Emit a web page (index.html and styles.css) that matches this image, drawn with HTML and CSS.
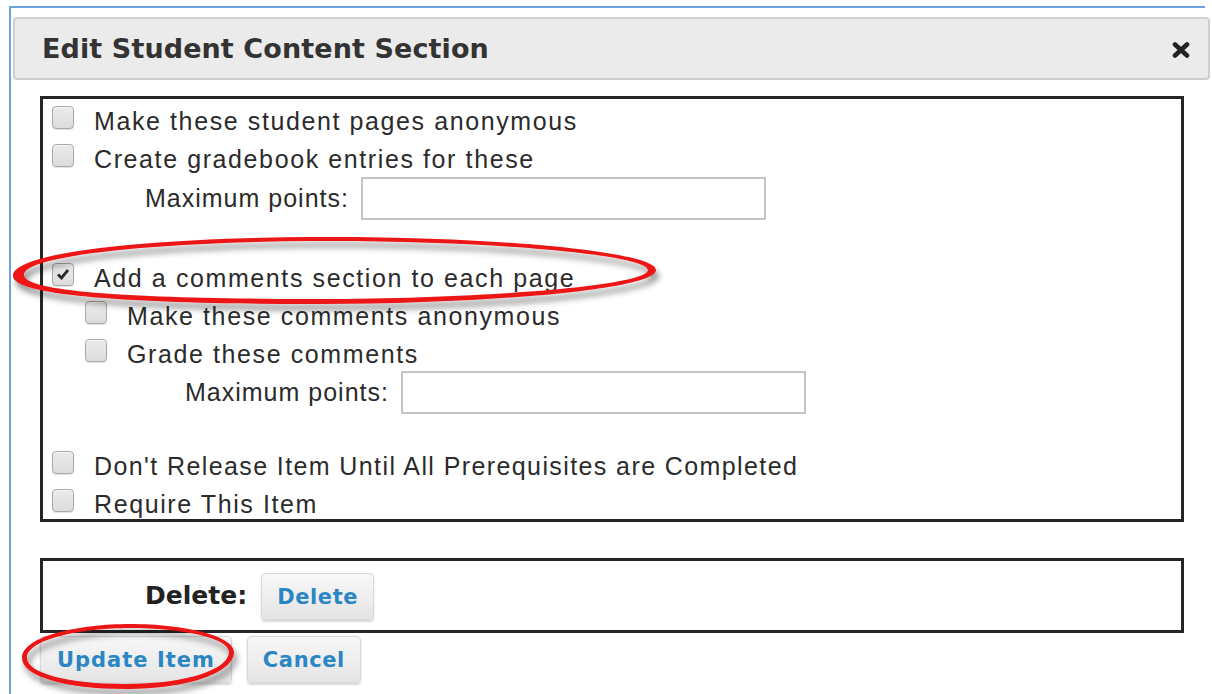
FILE: index.html
```html
<!DOCTYPE html>
<html lang="en">
<head>
<meta charset="utf-8">
<title>Edit Student Content Section</title>
<link rel="stylesheet" href="styles.css">
</head>
<body>
<div class="page">
  <div class="frame">
    <div class="titlebar">
      <span class="title">Edit Student Content Section</span>
      <span class="close" aria-label="close">
        <svg width="18" height="16" viewBox="0 0 18 16"><path d="M3 2.5 L15 13.5 M15 2.5 L3 13.5" stroke="#222" stroke-width="4.6" stroke-linecap="round"/></svg>
      </span>
    </div>

    <div class="box options">
      <div class="row"><span class="cb"></span><span class="label">Make these student pages anonymous</span></div>
      <div class="row"><span class="cb"></span><span class="label">Create gradebook entries for these</span></div>
      <div class="field field-a"><span class="label">Maximum points:</span><span class="input"></span></div>

      <div class="row row-gap-a"><span class="cb checked"><svg width="14" height="12" viewBox="0 0 14 12"><path d="M2 6.5 L5.5 10 L12 2" fill="none" stroke="#2a2a2a" stroke-width="2.8"/></svg></span><span class="label">Add a comments section to each page</span></div>
      <div class="row sub"><span class="cb"></span><span class="label">Make these comments anonymous</span></div>
      <div class="row sub"><span class="cb"></span><span class="label">Grade these comments</span></div>
      <div class="field field-b"><span class="label">Maximum points:</span><span class="input"></span></div>

      <div class="row row-gap-b"><span class="cb"></span><span class="label label-long">Don't Release Item Until All Prerequisites are Completed</span></div>
      <div class="row"><span class="cb"></span><span class="label">Require This Item</span></div>
    </div>

    <div class="box delete-box">
      <span class="delete-label">Delete:</span>
      <span class="btn">Delete</span>
    </div>

    <div class="actions">
      <span class="btn btn-primary">Update Item</span>
      <span class="btn">Cancel</span>
    </div>
  </div>

  <!-- hand-drawn red rings marking the comments option and the update button -->
  <svg class="marks" width="1212" height="694" viewBox="0 0 1212 694">
    <defs>
      <filter id="soft" x="-10%" y="-40%" width="120%" height="180%">
        <feDropShadow dx="3" dy="6" stdDeviation="3" flood-color="#000" flood-opacity="0.45"/>
      </filter>
    </defs>
    <path filter="url(#soft)" fill="#ec1414" fill-rule="evenodd"
      d="M13 276 C13 250 170 237 330 237 C500 237 656 252 656 270 C656 290 480 304 320 304 C160 304 13 298 13 276 Z
         M24 275 C24 254 175 241 330 241 C495 241 648 255 648 270 C648 286 478 299 320 299 C165 299 24 294 24 275 Z"/>
    <path filter="url(#soft)" fill="#ec1414" fill-rule="evenodd"
      d="M22 658 C22 636 80 624 130 624 C185 624 234 636 234 652 C234 672 190 689 125 689 C65 689 22 676 22 658 Z
         M27 658 C27 639 82 628 130 628 C182 628 229 638 229 652 C229 669 188 684 125 684 C68 684 27 673 27 658 Z"/>
  </svg>
</div>
</body>
</html>
```

FILE: styles.css
```css
html, body {
  margin: 0;
  padding: 0;
  background: #fff;
}

body {
  font-family: "Liberation Sans", Arial, sans-serif;
  color: #2b2b2b;
}

.page {
  position: relative;
  width: 1212px;
  height: 694px;
  overflow: hidden;
}

.frame {
  width: 1192px;
  margin: 6px 0 0 9px;
  border-top: 2px solid #6fa3dc;
  border-left: 2px solid #6fa3dc;
  padding: 9px 0 0 2px;
  height: 700px;
}

/* dialog title bar */
.titlebar {
  width: 1197px;
  height: 63px;
  box-sizing: border-box;
  background: #ebebeb;
  border: 2px solid #cfcfcf;
  border-radius: 4px;
  display: flex;
  align-items: center;
  justify-content: space-between;
  padding: 0 18px 0 27px;
}

.title {
  font-family: "DejaVu Sans", Verdana, sans-serif;
  font-weight: bold;
  font-size: 27px;
  letter-spacing: 0.1px;
  color: #333;
}

.close {
  display: flex;
  width: 18px;
  height: 16px;
  margin-top: 2px;
}

/* bordered panels */
.box {
  box-sizing: border-box;
  width: 1144px;
  margin: 16px 0 0 27px;
  border: 3px solid #262626;
}

.options {
  height: 426px;
  padding: 3px 0 0 9px;
}

.row {
  display: flex;
  align-items: center;
  height: 38px;
}

.row.sub {
  padding-left: 33px;
}

.row-gap-a {
  margin-top: 39px;
}

.row-gap-b {
  margin-top: 33px;
}

.label {
  font-size: 25px;
  letter-spacing: 1.6px;
  white-space: nowrap;
  color: #2b2b2b;
}

.label-long {
  letter-spacing: 1.4px;
}

.cb {
  width: 22px;
  height: 23px;
  box-sizing: border-box;
  border: 1px solid #a9a9a9;
  border-radius: 4px;
  background: linear-gradient(#ebebeb, #dcdcdc);
  box-shadow: inset 0 1px 0 #f6f6f6, 0 1px 1px rgba(0, 0, 0, 0.12);
  margin: 0 20px 8px 0;
  flex: none;
  display: flex;
  align-items: center;
  justify-content: center;
}

.field {
  display: flex;
  align-items: center;
  height: 43px;
}

.field-a {
  padding-left: 93px;
  margin-top: -1px;
}

.field-b {
  padding-left: 133px;
  margin-top: -2px;
}

.field .label {
  letter-spacing: 1px;
  margin-right: 12px;
}

.input {
  width: 405px;
  height: 43px;
  box-sizing: border-box;
  border: 2px solid #c3c3c3;
  background: #fff;
}

/* delete panel */
.delete-box {
  margin-top: 36px;
  height: 75px;
  display: flex;
  align-items: center;
  padding-left: 102px;
}

.delete-label {
  font-family: "DejaVu Sans", Verdana, sans-serif;
  font-weight: bold;
  font-size: 25px;
  color: #222;
  margin-right: 14px;
}

/* buttons */
.btn {
  display: inline-flex;
  align-items: center;
  height: 47px;
  box-sizing: border-box;
  padding: 0 15px;
  border: 1px solid #d8d8d8;
  border-radius: 4px;
  background: linear-gradient(#f8f8f8, #e4e4e4);
  box-shadow: 0 2px 2px rgba(0, 0, 0, 0.15);
  font-family: "DejaVu Sans", Verdana, sans-serif;
  font-weight: bold;
  font-size: 21px;
  letter-spacing: 0.6px;
  color: #2b86c4;
}

.delete-box .btn {
  margin-top: 2px;
}

.actions {
  display: flex;
  gap: 15px;
  margin: 3px 0 0 27px;
}

.btn-primary {
  letter-spacing: 1px;
  padding: 0 16px;
}

.marks {
  position: absolute;
  left: 0;
  top: 0;
  pointer-events: none;
}
```
